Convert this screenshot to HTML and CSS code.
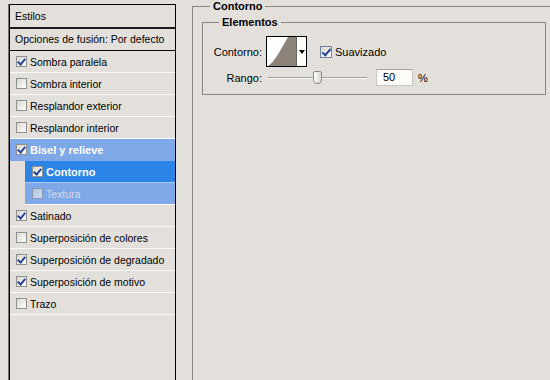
FILE: index.html
```html
<!DOCTYPE html>
<html lang="es">

<head>
	<meta charset="UTF-8">
	<meta name="viewport" content="width=device-width, initial-scale=1.0">
	<title>Estilo de capa</title>
	<link rel="stylesheet" href="styles.css">
</head>

<body>

	<div class="layer-style">
		<div class="styles-panel">
			<div class="panel-title">Estilos</div>
			<div class="panel-blend">Opciones de fusión: Por defecto</div>
			<ul class="effect-list">
				<li class="effect"><span class="check checked"></span>Sombra paralela</li>
				<li class="effect"><span class="check"></span>Sombra interior</li>
				<li class="effect"><span class="check"></span>Resplandor exterior</li>
				<li class="effect"><span class="check"></span>Resplandor interior</li>
				<li class="effect active"><span class="check checked"></span>Bisel y relieve</li>
				<li class="effect sub current"><span class="check checked"></span>Contorno</li>
				<li class="effect sub dim"><span class="check"></span>Textura</li>
				<li class="effect"><span class="check checked"></span>Satinado</li>
				<li class="effect"><span class="check"></span>Superposición de colores</li>
				<li class="effect"><span class="check checked"></span>Superposición de degradado</li>
				<li class="effect"><span class="check checked"></span>Superposición de motivo</li>
				<li class="effect"><span class="check"></span>Trazo</li>
			</ul>
		</div>

		<div class="settings">
			<fieldset class="group outer">
				<legend>Contorno</legend>
				<fieldset class="group inner">
					<legend>Elementos</legend>

					<div class="row">
						<span class="label">Contorno:</span>
						<div class="contour-picker">
							<svg class="contour-preview" width="29" height="29" viewBox="0 0 29 29">
								<path d="M0 29 C6 28 14 12 21 0 L29 0 L29 29 Z" fill="#8d837a" />
							</svg>
							<span class="contour-arrow"></span>
						</div>
						<label class="smooth"><span class="check checked big"></span>Suavizado</label>
					</div>

					<div class="row range-row">
						<span class="label">Rango:</span>
						<div class="slider">
							<span class="slider-thumb"></span>
						</div>
						<div class="value-input">50</div>
						<span class="unit">%</span>
					</div>
				</fieldset>
			</fieldset>
		</div>
	</div>

</body>

</html>
```

FILE: styles.css
```css
body {
	margin: 0;
	height: 380px;
	overflow: hidden;
	background-color: #e3e0dc;
	font-family: "Liberation Sans", Arial, sans-serif;
	font-size: 11px;
	color: #000;
}

.layer-style {
	display: flex;
	height: 380px;
	overflow: hidden;
	white-space: nowrap;
}

/* --- Left list of styles --- */
.styles-panel {
	flex: none;
	width: 165px;
	margin: 4px 0 0 9px;
	border: 1px solid #000;
	border-bottom: none;
	box-shadow: -1px 0 0 #77726d;
	font-size: 10.5px;
}

.panel-title {
	height: 22px;
	line-height: 22px;
	padding-left: 5px;
	border-bottom: 2px solid #1b1b1b;
}

.panel-blend {
	height: 21px;
	line-height: 21px;
	padding-left: 5px;
	border-bottom: 1px solid #000;
}

.effect-list {
	list-style: none;
	margin: 0;
	padding: 0;
}

.effect {
	display: flex;
	align-items: center;
	gap: 3px;
	height: 21px;
	padding-left: 6px;
	border-bottom: 1px solid #fbfbfa;
}

.effect.sub {
	margin-left: 15px;
	padding-left: 7px;
}

.effect.active {
	background-color: #7ea8e7;
	border-bottom-color: #7ea8e7;
	color: #fff;
	font-weight: bold;
	font-size: 11px;
}

.effect.current {
	background-color: #2b84e6;
	border-bottom-color: #a9c6ef;
	color: #fff;
	font-weight: bold;
	font-size: 11px;
}

.effect.dim {
	background-color: #7ea8e7;
	color: #d3dbe8;
}

/* --- Checkboxes --- */
.check {
	position: relative;
	flex: none;
	width: 11px;
	height: 11px;
	box-sizing: border-box;
	border: 1px solid #8f8f8c;
	background: linear-gradient(135deg, #d8d6d1, #ffffff);
}

.check.big {
	width: 12px;
	height: 12px;
	border-color: #6c7f9c;
}

.check.checked::after {
	content: "";
	position: absolute;
	left: 2px;
	top: 0;
	width: 3px;
	height: 6px;
	border-right: 2px solid #2b4597;
	border-bottom: 2px solid #2b4597;
	transform: rotate(40deg);
}

.check.big.checked::after {
	left: 3px;
	top: 0;
	height: 7px;
}

.effect.dim .check {
	opacity: 0.6;
}

/* --- Right settings --- */
.settings {
	flex: none;
	margin-left: 16px;
}

.group {
	margin: 0;
	min-width: 0;
	border: 1px solid #8b8580;
}

.group legend {
	font-weight: bold;
	line-height: 13px;
	padding: 0 3px;
}

.outer {
	width: 400px;
	height: 390px;
	padding: 3px 0 0 9px;
}

.outer > legend {
	margin-left: 8px;
}

.inner {
	box-sizing: border-box;
	width: 344px;
	padding: 7px 10px 8px 10px;
}

.inner > legend {
	margin-left: 6px;
}

.row {
	display: flex;
	align-items: center;
	height: 31px;
}

.label {
	width: 49px;
	margin-right: 4px;
	text-align: right;
}

.contour-picker {
	display: flex;
	box-sizing: border-box;
	width: 41px;
	height: 31px;
	border: 1px solid #000;
	background-color: #fff;
}

.contour-preview {
	display: block;
}

.contour-arrow {
	position: relative;
	flex: 1;
	border-left: 1px solid #6b6560;
}

.contour-arrow::after {
	content: "";
	position: absolute;
	left: 2px;
	top: 13px;
	border-left: 3px solid transparent;
	border-right: 3px solid transparent;
	border-top: 4px solid #000;
}

.smooth {
	display: flex;
	align-items: center;
	gap: 3px;
	margin-left: 13px;
	margin-top: 1px;
}

.range-row {
	height: 17px;
	margin-top: 2px;
}

.slider {
	position: relative;
	width: 99px;
	height: 17px;
	margin-left: 2px;
}

.slider::before {
	content: "";
	position: absolute;
	left: 0;
	right: 0;
	top: 8px;
	height: 1px;
	background-color: #a39d97;
	border-bottom: 1px solid #fafafa;
}

.slider-thumb {
	position: absolute;
	left: 45px;
	top: 2px;
	box-sizing: border-box;
	width: 9px;
	height: 13px;
	border: 1px solid #8f8983;
	border-radius: 2px 2px 4px 4px;
	background: linear-gradient(90deg, #ffffff, #d9d6d1);
}

.value-input {
	box-sizing: border-box;
	width: 37px;
	height: 17px;
	line-height: 15px;
	margin-left: 9px;
	padding-left: 6px;
	border: 1px solid #c9c5c0;
	border-top-color: #a7a29c;
	background-color: #fbfbfa;
}

.unit {
	margin-left: 5px;
}
```
